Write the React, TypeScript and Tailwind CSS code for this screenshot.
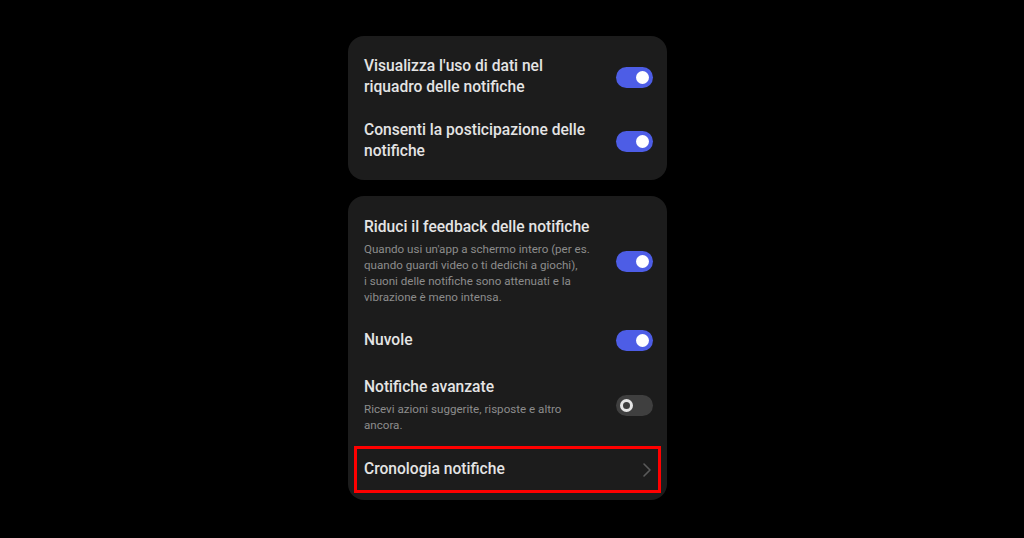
import React from "react";

function Toggle({ on }: { on: boolean }) {
  if (on) {
    return (
      <div className="flex h-[21px] w-[37px] shrink-0 items-center justify-end rounded-full bg-[#4d5de6] pr-[4px]">
        <div className="h-[13px] w-[13px] rounded-full bg-white" />
      </div>
    );
  }
  return (
    <div className="flex h-[21px] w-[37px] shrink-0 items-center justify-start rounded-full bg-[#3f3f3f] pl-[4px]">
      <div className="h-[13px] w-[13px] rounded-full border-[3px] border-[#e6e6e6] bg-[#3f3f3f]" />
    </div>
  );
}

function Title({ children }: { children: React.ReactNode }) {
  return (
    <div className="whitespace-nowrap text-[15.6px] font-medium leading-[21px] text-[#e4e4e4]">
      {children}
    </div>
  );
}

function Desc({ children }: { children: React.ReactNode }) {
  return (
    <div className="mt-[3px] whitespace-nowrap text-[11.6px] leading-[16px] text-[#8c8c8c]">
      {children}
    </div>
  );
}

export default function App() {
  return (
    <div
      className="flex h-[538px] w-[1024px] flex-col items-center bg-black pr-[9px] pt-[36px]"
      style={{ fontFamily: "Roboto, 'Noto Sans', sans-serif" }}
    >
      <div className="flex w-[319px] flex-col gap-[22px] rounded-[16px] bg-[#1c1c1c] pb-[18px] pl-[16px] pr-[14px] pt-[20px]">
        <div className="flex items-center justify-between">
          <Title>
            Visualizza l'uso di dati nel
            <br />
            riquadro delle notifiche
          </Title>
          <Toggle on />
        </div>
        <div className="flex items-center justify-between">
          <Title>
            Consenti la posticipazione delle
            <br />
            notifiche
          </Title>
          <Toggle on />
        </div>
      </div>

      <div className="mt-[16px] flex w-[319px] flex-col rounded-[16px] bg-[#1c1c1c] pb-[7px] pt-[21px]">
        <div className="flex items-center justify-between pl-[16px] pr-[14px]">
          <div>
            <Title>Riduci il feedback delle notifiche</Title>
            <Desc>
              Quando usi un'app a schermo intero (per es.
              <br />
              quando guardi video o ti dedichi a giochi),
              <br />
              i suoni delle notifiche sono attenuati e la
              <br />
              vibrazione è meno intensa.
            </Desc>
          </div>
          <Toggle on />
        </div>

        <div className="mt-[25px] flex items-center justify-between pl-[16px] pr-[14px]">
          <Title>Nuvole</Title>
          <Toggle on />
        </div>

        <div className="mt-[26px] flex items-center justify-between pl-[16px] pr-[14px]">
          <div>
            <Title>Notifiche avanzate</Title>
            <Desc>
              Ricevi azioni suggerite, risposte e altro
              <br />
              ancora.
            </Desc>
          </div>
          <Toggle on={false} />
        </div>

        <div className="mx-[6px] mt-[13px] flex h-[47px] items-center justify-between border-[3px] border-[#ff0000] pl-[7px] pr-[6px]">
          <Title>Cronologia notifiche</Title>
          <svg width="10" height="16" viewBox="0 0 10 16" fill="none">
            <path d="M2 2 L8 8 L2 14" stroke="#5a5a5a" strokeWidth="1.6" strokeLinecap="round" strokeLinejoin="round" />
          </svg>
        </div>
      </div>
    </div>
  );
}
